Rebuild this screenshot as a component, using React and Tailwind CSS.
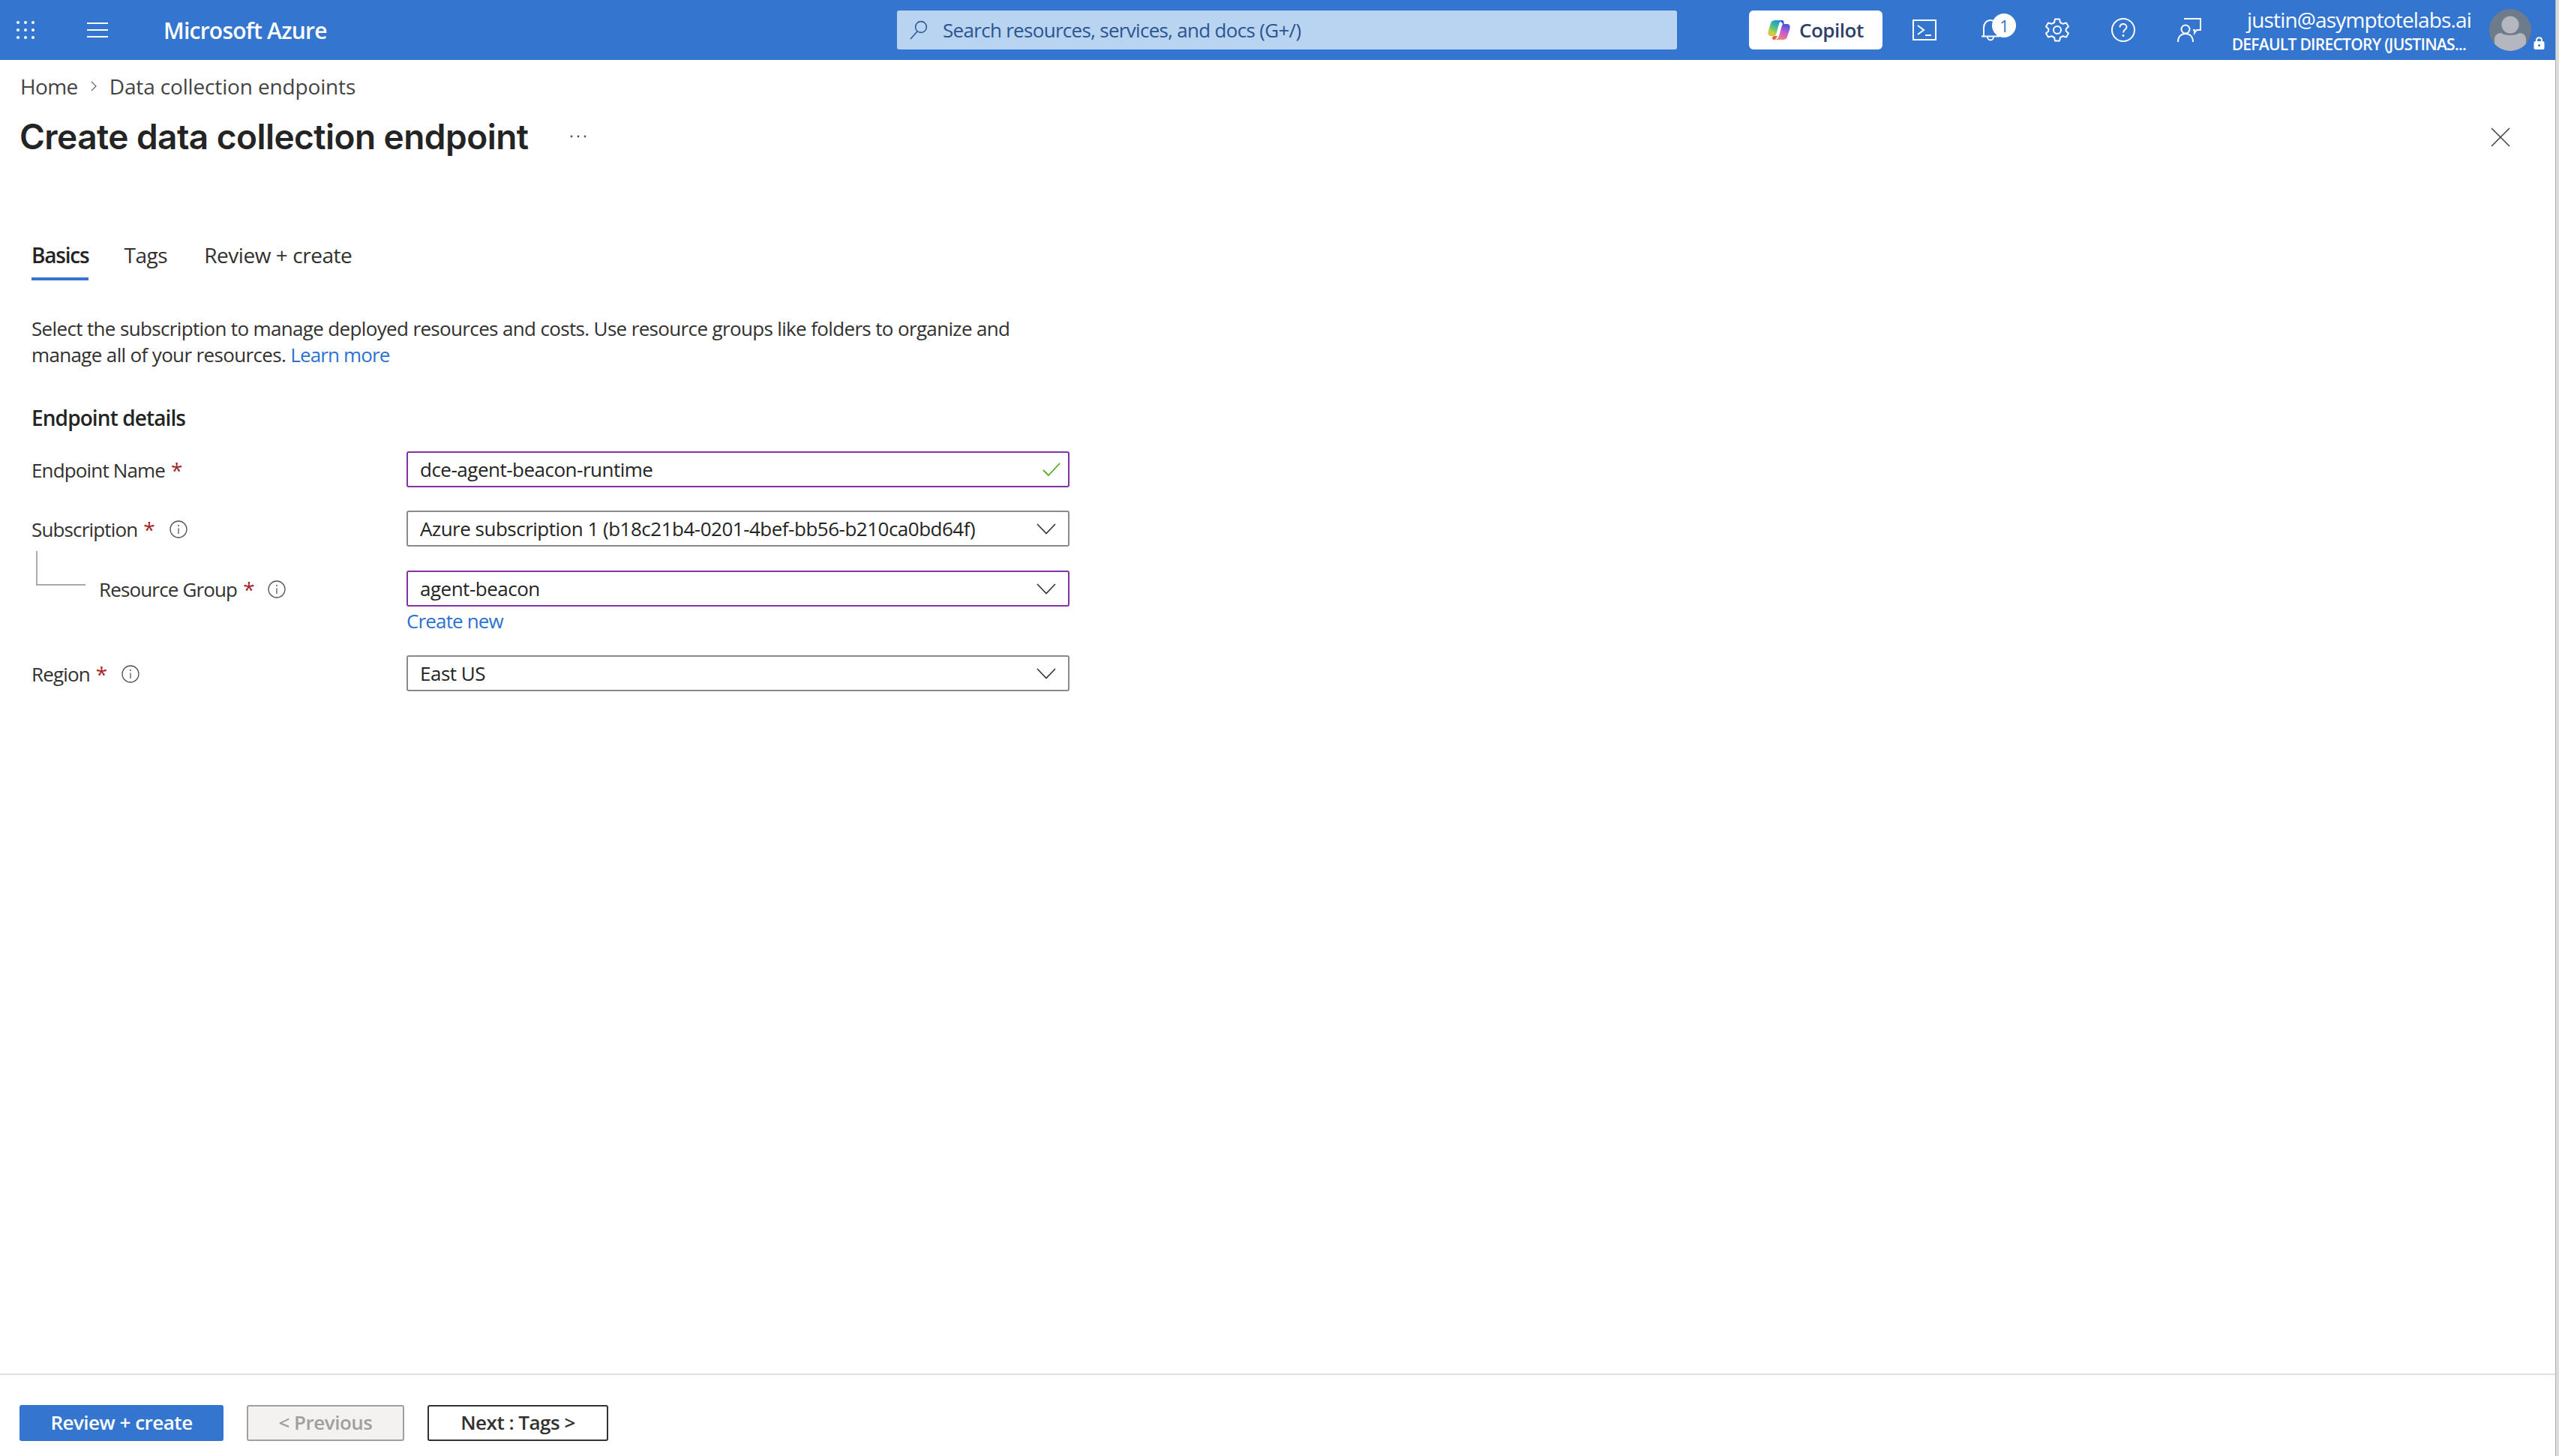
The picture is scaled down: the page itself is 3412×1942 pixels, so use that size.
import React from "react";

// Small inline icons for the portal top bar
function WaffleIcon() {
  const dots = [];
  for (let r = 0; r < 3; r++) {
    for (let c = 0; c < 3; c++) {
      dots.push(<rect key={`${r}-${c}`} x={c * 10} y={r * 10} width="4" height="4" rx="2" fill="#fff" />);
    }
  }
  return (
    <svg width="24" height="24" viewBox="0 0 24 24">
      {dots}
    </svg>
  );
}

function HamburgerIcon() {
  return (
    <svg width="28" height="20" viewBox="0 0 28 20" stroke="#fff" strokeWidth="2">
      <path d="M0 1h28M0 10h28M0 19h28" />
    </svg>
  );
}

function SearchIcon() {
  return (
    <svg width="24" height="26" viewBox="0 0 24 26" fill="none" stroke="#2f5a96" strokeWidth="1.6">
      <circle cx="15" cy="9" r="7.4" />
      <path d="M10 15 L1 25" />
    </svg>
  );
}

function CopilotLogo() {
  return (
    <svg width="30" height="28" viewBox="0 0 30 28">
      <defs>
        <linearGradient id="cpLeft" x1="0.7" y1="0" x2="0.2" y2="1">
          <stop offset="0" stopColor="#1f8fe6" />
          <stop offset="0.45" stopColor="#45c08a" />
          <stop offset="0.8" stopColor="#c7d23c" />
          <stop offset="1" stopColor="#f0b84a" />
        </linearGradient>
        <linearGradient id="cpRight" x1="0.6" y1="0" x2="0.3" y2="1">
          <stop offset="0" stopColor="#4a55d8" />
          <stop offset="0.4" stopColor="#b05ad8" />
          <stop offset="0.75" stopColor="#e668a8" />
          <stop offset="1" stopColor="#f2924a" />
        </linearGradient>
      </defs>
      <path d="M10 1 H20 L16.5 3 C14.5 6 13 14 11 20 C10 22 9 22 7 22 H4 C1 22 0 19 0.5 16 L4 5 C5 2 7 1 10 1 Z" fill="url(#cpLeft)" />
      <path d="M20 6 H26 C29 6 30 9 29.5 12 L26 23 C25 26 23 27 20 27 H10 L13.5 25 C15.5 22 17 14 19 8 Z" fill="url(#cpRight)" />
      <path d="M19 1 C21 1 22 3 21.5 6 L20 6 C19 4 18 3 16 2 Z" fill="#3b4ecb" />
      <path d="M8 27 C9 27 10 27 10.5 26 L13 22 L9 22 C7 22 6 23 6 25 C6 26 7 27 8 27 Z" fill="#e8604a" />
    </svg>
  );
}

function TerminalIcon() {
  return (
    <svg width="32" height="28" viewBox="0 0 32 28" fill="none" stroke="#fff" strokeWidth="2">
      <rect x="1" y="1" width="30" height="26" />
      <path d="M7 8 L15 14 L7 20" />
      <path d="M17 21 H25" />
    </svg>
  );
}

function BellIcon() {
  return (
    <svg width="24" height="30" viewBox="0 0 24 30" fill="none" stroke="#fff" strokeWidth="2">
      <path d="M3 23 V12 C3 6 7 2 12 2 C17 2 21 6 21 12 V23" />
      <path d="M0 23.5 H24" />
      <path d="M8 24 C8 27 10 28.5 12 28.5 C14 28.5 16 27 16 24" />
    </svg>
  );
}

function GearIcon() {
  return (
    <svg width="32" height="32" viewBox="0 0 32 32" fill="none" stroke="#fff" strokeWidth="2" strokeLinejoin="round">
      <circle cx="16" cy="16" r="5" />
      <path d="M13 1.5 H19 L20 6 L23.5 7.8 L28 6.5 L31 11.5 L27.7 14.5 V17.5 L31 20.5 L28 25.5 L23.5 24.2 L20 26 L19 30.5 H13 L12 26 L8.5 24.2 L4 25.5 L1 20.5 L4.3 17.5 V14.5 L1 11.5 L4 6.5 L8.5 7.8 L12 6 Z" />
    </svg>
  );
}

function HelpIcon() {
  return (
    <svg width="32" height="32" viewBox="0 0 32 32" fill="none" stroke="#fff" strokeWidth="2">
      <circle cx="16" cy="16" r="15" />
      <path d="M11.5 12.5 C11.5 9.5 13.5 8 16 8 C18.5 8 20.5 9.7 20.5 12 C20.5 15.5 16 15.5 16 19.5" />
      <circle cx="16" cy="23.5" r="1.4" fill="#fff" stroke="none" />
    </svg>
  );
}

function FeedbackIcon() {
  return (
    <svg width="32" height="32" viewBox="0 0 32 32" fill="none" stroke="#fff" strokeWidth="2">
      <path d="M9 1 H31 V16 H26 L23 20 V16 H21" />
      <circle cx="11" cy="15" r="5.5" />
      <path d="M1 32 C1 25 5 21 11 21 C17 21 21 25 21 32" />
    </svg>
  );
}

function Avatar() {
  return (
    <svg width="56" height="56" viewBox="0 0 56 56">
      <defs>
        <clipPath id="avClip">
          <circle cx="28" cy="28" r="28" />
        </clipPath>
      </defs>
      <circle cx="28" cy="28" r="28" fill="#6e7b8b" />
      <g clipPath="url(#avClip)" fill="#b4b7be">
        <circle cx="28" cy="21" r="11.5" />
        <path d="M7 56 V40 C7 35 11 32 16 32 C20 36 36 36 40 32 C45 32 49 35 49 40 V56 Z" />
      </g>
    </svg>
  );
}

function LockIcon() {
  return (
    <svg width="15" height="17" viewBox="0 0 15 17">
      <path d="M4 7 V4.5 C4 2.5 5.5 1.2 7.5 1.2 C9.5 1.2 11 2.5 11 4.5 V7" fill="none" stroke="#fff" strokeWidth="2" />
      <rect x="0.5" y="6" width="14" height="11" rx="2" fill="#fff" />
      <circle cx="7.5" cy="11.5" r="1.5" fill="#3375cf" />
    </svg>
  );
}

function InfoIcon() {
  return (
    <svg width="24" height="24" viewBox="0 0 24 24" fill="none" stroke="#555" strokeWidth="1.3">
      <circle cx="12" cy="12" r="11" />
      <path d="M12 10.5 V18" />
      <circle cx="12" cy="7" r="1" fill="#555" stroke="none" />
    </svg>
  );
}

function ChevronIcon() {
  return (
    <svg width="26" height="15" viewBox="0 0 26 15" fill="none" stroke="#333" strokeWidth="1.6">
      <path d="M1 1 L13 13.5 L25 1" />
    </svg>
  );
}

function Required() {
  return <span className="ml-[8px] text-[28px] text-[#a4262c] leading-none">*</span>;
}

function SelectBox({ value, focused }) {
  return (
    <div
      className={`flex items-center justify-between w-[884px] h-[48px] pl-[16px] pr-[16px] border-2 rounded-[3px] tracking-[-0.5px] ${
        focused ? "border-[#8232a3]" : "border-[#8a8a8a]"
      }`}
    >
      <span className="text-[#242424]">{value}</span>
      <ChevronIcon />
    </div>
  );
}

export default function App() {
  return (
    <div className="flex w-full h-[1942px] bg-white overflow-hidden">
      <div className="flex flex-col flex-1 min-w-0 text-[26px] text-[#323130] font-['Open_Sans',sans-serif] tracking-[-0.85px]">
        {/* top bar */}
        <header className="flex items-center h-[80px] bg-[#3375cf] text-white shrink-0">
          <div className="ml-[22px] flex">
            <WaffleIcon />
          </div>
          <div className="ml-[70px] flex">
            <HamburgerIcon />
          </div>
          <div className="ml-[74px] w-[258px] font-semibold text-[30px] tracking-[-0.75px] whitespace-nowrap">Microsoft Azure</div>
          <div className="flex items-center gap-[20px] w-[1040px] h-[52px] ml-[720px] pl-[17px] bg-[#b9d4f1] rounded-[3px] text-[#2b5590] tracking-[-0.7px]">
            <SearchIcon />
            <span>Search resources, services, and docs (G+/)</span>
          </div>
          <div className="flex items-center gap-[12px] w-[178px] h-[52px] ml-[96px] pl-[25px] bg-white rounded-[6px] text-[#2d3f6b] font-semibold tracking-[-0.5px]">
            <CopilotLogo />
            <span>Copilot</span>
          </div>
          <div className="ml-[40px] flex">
            <TerminalIcon />
          </div>
          <div className="relative ml-[60px] flex">
            <BellIcon />
            <span className="absolute -top-[7px] left-[14px] flex items-center justify-center w-[32px] h-[32px] rounded-full bg-white text-[#3375cf] text-[22px]">1</span>
          </div>
          <div className="ml-[61px] flex">
            <GearIcon />
          </div>
          <div className="ml-[56px] flex">
            <HelpIcon />
          </div>
          <div className="ml-[56px] flex">
            <FeedbackIcon />
          </div>
          <div className="flex flex-col items-end w-[328px] ml-[32px] leading-none">
            <span className="text-[28px] mt-[2px] whitespace-nowrap">justin@asymptotelabs.ai</span>
            <span className="mt-[9px] mr-[7px] text-[21px] font-semibold tracking-[-0.72px] whitespace-nowrap">DEFAULT DIRECTORY (JUSTINAS...</span>
          </div>
          <div className="relative ml-[24px] flex">
            <Avatar />
            <span className="absolute left-[59px] top-[37px] flex">
              <LockIcon />
            </span>
          </div>
        </header>

        {/* breadcrumb + title */}
        <div className="flex items-center gap-[17px] mt-[16px] ml-[27px] h-[38px] text-[28px] tracking-[-0.15px] text-[#444]">
          <span className="tracking-[-0.6px]">Home</span>
          <svg width="8" height="14" viewBox="0 0 8 14" fill="none" stroke="#666" strokeWidth="1.2">
            <path d="M1 1 L7 7 L1 13" />
          </svg>
          <span>Data collection endpoints</span>
        </div>
        <div className="flex items-center justify-between mt-[21px] ml-[26px] mr-[60px] h-[54px]">
          <div className="flex items-center gap-[56px]">
            <h1 className="font-['Inter',sans-serif] font-semibold text-[46px] leading-[54px] tracking-[-0.55px] text-[#242424] whitespace-nowrap">Create data collection endpoint</h1>
            <svg width="22" height="4" viewBox="0 0 22 4" fill="#555">
              <circle cx="2" cy="2" r="1.4" />
              <circle cx="11" cy="2" r="1.4" />
              <circle cx="20" cy="2" r="1.4" />
            </svg>
          </div>
          <svg className="mt-[2px]" width="26" height="26" viewBox="0 0 26 26" stroke="#444" strokeWidth="1.6">
            <path d="M1 1 L25 25 M25 1 L1 25" />
          </svg>
        </div>

        {/* tabs */}
        <div className="flex mt-[108px] ml-[42px] gap-[47px] text-[28px] tracking-[-0.45px]">
          <div className="flex flex-col">
            <span className="h-[46px] leading-[46px] font-semibold text-[#242424] tracking-[-1.2px]">Basics</span>
            <span className="h-[4px] mt-[7px] bg-[#3375cf]" />
          </div>
          <span className="h-[46px] leading-[46px]">Tags</span>
          <span className="h-[46px] leading-[46px] ml-[2px]">Review + create</span>
        </div>

        {/* description */}
        <div className="mt-[47px] ml-[42px] w-[1330px] leading-[35px] tracking-[-0.65px] text-[#323130]">
          Select the subscription to manage deployed resources and costs. Use resource groups like folders to organize and
          manage all of your resources. <span className="text-[#2d72d2] tracking-[-0.85px]">Learn more</span>
        </div>

        <div className="mt-[48px] ml-[42px] font-semibold text-[28px] tracking-[-0.9px] text-[#242424] leading-[36px]">Endpoint details</div>

        {/* form */}
        <div className="flex flex-col mt-[27px] ml-[42px]">
          <div className="flex items-center h-[48px]">
            <div className="flex items-center w-[500px] pt-[2px]">
              <span>Endpoint Name</span>
              <Required />
            </div>
            <div className="flex items-center justify-between w-[884px] h-[48px] pl-[16px] pr-[10px] border-2 border-[#8232a3] rounded-[3px] tracking-[-0.5px]">
              <span className="text-[#242424]">dce-agent-beacon-runtime</span>
              <svg width="24" height="18" viewBox="0 0 24 18" fill="none" stroke="#5ba829" strokeWidth="1.8">
                <path d="M1 10 L8 17 L23 1" />
              </svg>
            </div>
          </div>

          <div className="flex items-center h-[48px] mt-[31px]">
            <div className="flex items-center w-[500px] pt-[2px]">
              <span>Subscription</span>
              <Required />
              <span className="ml-[20px] flex">
                <InfoIcon />
              </span>
            </div>
            <SelectBox value="Azure subscription 1 (b18c21b4-0201-4bef-bb56-b210ca0bd64f)" />
          </div>

          <div className="flex items-start h-[48px] mt-[32px]">
            <div className="flex items-start w-[500px]">
              <div className="w-[66px] h-[46px] -mt-[26px] ml-[6px] border-l-2 border-b-2 border-[#aaaaaa] shrink-0" />
              <div className="flex items-center h-[48px] ml-[18px] pt-[2px]">
                <span>Resource Group</span>
                <Required />
                <span className="ml-[18px] flex">
                  <InfoIcon />
                </span>
              </div>
            </div>
            <SelectBox value="agent-beacon" focused />
          </div>

          <div className="ml-[500px] mt-[2px] h-[34px] leading-[34px] text-[#2d72d2]">Create new</div>

          <div className="flex items-center h-[48px] mt-[29px]">
            <div className="flex items-center w-[500px] pt-[2px]">
              <span>Region</span>
              <Required />
              <span className="ml-[20px] flex">
                <InfoIcon />
              </span>
            </div>
            <SelectBox value="East US" />
          </div>
        </div>

        {/* footer buttons */}
        <div className="mt-auto border-t-2 border-[#e0e0e0] h-[110px] pt-[40px] pl-[26px] flex gap-[31px] font-semibold tracking-[-0.5px]">
          <button className="w-[272px] h-[48px] pb-[2px] bg-[#3375cf] text-white rounded-[3px]">Review + create</button>
          <button className="w-[210px] h-[48px] pb-[2px] bg-[#f3f2f1] border-2 border-[#a19f9d] text-[#a19f9d] rounded-[3px]">&lt; Previous</button>
          <button className="w-[241px] h-[48px] pb-[2px] bg-white border-2 border-[#323130] text-[#323130] rounded-[3px]">Next : Tags &gt;</button>
        </div>
      </div>
      {/* browser scrollbar strip */}
      <div className="w-[5px] shrink-0 bg-[#dcdcdc] border-l border-[#b0b0b0]" />
    </div>
  );
}
